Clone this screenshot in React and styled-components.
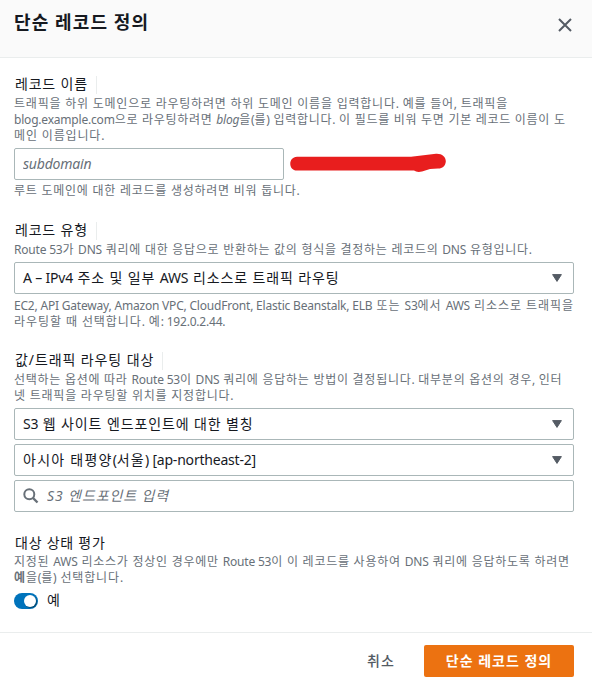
import React from 'react';
import styled, { createGlobalStyle } from 'styled-components';

const GlobalStyle = createGlobalStyle`
  * { box-sizing: border-box; }
  body { margin: 0; background: #fff; }
  button, input { font: inherit; }
`;

const Dialog = styled.div`
  display: flex;
  flex-direction: column;
  width: 592px;
  height: 688px;
  overflow: hidden;
  background: #fff;
  color: #16191f;
  font-family: "Noto Sans", "Noto Sans CJK KR", sans-serif;
  font-size: 14px;
`;

const Header = styled.header`
  display: flex;
  justify-content: space-between;
  align-items: flex-start;
  height: 58px;
  padding: 10px 20px 0 14px;
  background: #fafafa;
  border-bottom: 1px solid #eaeded;
`;

const Title = styled.h1`
  margin: 0;
  font-size: 18px;
  line-height: 24px;
  font-weight: 700;
  letter-spacing: 1.1px;
  white-space: nowrap;
`;

const CloseButton = styled.button`
  display: flex;
  margin: 8px 0 0;
  padding: 0;
  border: 0;
  background: none;
`;

const Body = styled.main`
  display: flex;
  flex-direction: column;
  padding: 17px 18px 0 14px;
  height: 575px;
  border-bottom: 1px solid #eaeded;
`;

const Field = styled.section`
  display: flex;
  flex-direction: column;
  margin-bottom: ${(p) => p.$after || 0}px;
`;

const Label = styled.div`
  display: flex;
  align-items: center;
  height: 20px;
  padding: 0 0 2px 1px;
  line-height: 18px;
  letter-spacing: ${(p) => p.$ls}px;
  white-space: nowrap;
`;

const LabelDivider = styled.span`
  width: 1px;
  height: 18px;
  margin: 2px 0 0 8px;
  background: #eaeded;
`;

const Hint = styled.div`
  margin: ${(p) => p.$m || '0'};
  color: #687078;
  font-size: 12px;
  line-height: 16px;
`;

const Line = styled.div`
  height: 16px;
  letter-spacing: ${(p) => p.$ls}px;
  white-space: nowrap;
`;

const Latin = styled.span`
  letter-spacing: -0.2px;
`;

const Controls = styled.div`
  display: flex;
  flex-direction: column;
  gap: 4px;
`;

const InputRow = styled.div`
  display: flex;
  align-items: center;
  gap: 5px;
`;

const Box = styled.div`
  display: flex;
  align-items: center;
  width: ${(p) => p.$width || '100%'};
  height: 32px;
  padding: 0 11px 0 8px;
  border: 1px solid #aab7b8;
  border-radius: 2px;
  background: #fff;
`;

const Value = styled.span`
  flex: 1;
  line-height: 20px;
  letter-spacing: ${(p) => p.$ls}px;
  white-space: nowrap;
`;

const Input = styled.input`
  flex: 1;
  min-width: 0;
  padding: 0;
  border: 0;
  outline: 0;
  background: none;
  line-height: 20px;
  &::placeholder {
    color: #687078;
    opacity: 1;
    font-style: italic;
    letter-spacing: ${(p) => p.$ls}px;
  }
`;

const SearchSvg = styled.svg`
  flex: none;
  margin-right: 8px;
`;

const ToggleRow = styled.label`
  display: flex;
  align-items: center;
  height: 16px;
  margin-top: 7px;
  gap: 9px;
`;

const ToggleText = styled.span`
  line-height: 18px;
  padding-bottom: 2px;
`;

const Switch = styled.span`
  display: flex;
  justify-content: flex-end;
  align-items: center;
  width: 24px;
  height: 16px;
  padding: 2px;
  border-radius: 8px;
  background: #0073bb;
`;

const Knob = styled.span`
  width: 12px;
  height: 12px;
  border-radius: 50%;
  background: #fff;
  box-shadow: 1px 1px 1px rgba(0, 28, 36, 0.5);
`;

const Footer = styled.footer`
  display: flex;
  justify-content: flex-end;
  align-items: flex-start;
  padding: 12px 18px 0 0;
`;

const Button = styled.button`
  height: 32px;
  width: ${(p) => p.$width}px;
  padding: 0;
  border: 0;
  border-radius: 2px;
  background: ${(p) => (p.$primary ? '#ec7211' : 'transparent')};
  color: ${(p) => (p.$primary ? '#fff' : '#545b64')};
  font-weight: ${(p) => (p.$primary ? 700 : 500)};
  line-height: 20px;
  letter-spacing: 1px;
`;

/* Latin runs are set tighter than the Hangul around them. */
function Mixed({ children }) {
  return children
    .split(/([!-~–]+(?: [!-~–]+)*)/)
    .map((run, i) => (i % 2 ? <Latin key={i}>{run}</Latin> : run));
}

function Caret() {
  return (
    <svg width="10" height="8" viewBox="0 0 10 8">
      <path d="M.6 .6h8.8L5 7.4z" fill="#545b64" stroke="#545b64" strokeLinejoin="round" />
    </svg>
  );
}

function Select({ ls, children }) {
  return (
    <Box>
      <Value $ls={ls}><Mixed>{children}</Mixed></Value>
      <Caret />
    </Box>
  );
}

export default function App() {
  return (
    <>
      <GlobalStyle />
      <Dialog>
        <Header>
          <Title>단순 레코드 정의</Title>
          <CloseButton aria-label="닫기">
            <svg width="14" height="14" viewBox="0 0 14 14" fill="none" stroke="#545b64" strokeWidth="2">
              <path d="M1 1l12 12M13 1L1 13" />
            </svg>
          </CloseButton>
        </Header>
        <Body>
          <Field $after={22}>
            <Label $ls={0.8}>레코드 이름<LabelDivider /></Label>
            <Hint $m="1px 0 4px">
              <Line $ls={0.775}><Mixed>트래픽을 하위 도메인으로 라우팅하려면 하위 도메인 이름을 입력합니다. 예를 들어, 트래픽을</Mixed></Line>
              <Line $ls={0.71}>
                <Mixed>blog.example.com으로 라우팅하려면 </Mixed>
                <i><Mixed>blog</Mixed></i>
                <Mixed>을(를) 입력합니다. 이 필드를 비워 두면 기본 레코드 이름이 도</Mixed>
              </Line>
              <Line $ls={0.85}><Mixed>메인 이름입니다.</Mixed></Line>
            </Hint>
            <InputRow>
              <Box $width="270px"><Input placeholder="subdomain" $ls={-0.2} /></Box>
              <svg width="158" height="22" viewBox="289 153 158 22">
                <path d="M297 156.7H411L436 153.8C442 153.4 446 157 445.8 161.5C445.5 166 442 168.8 438 168.6L430 169L422 171.5C418 172.6 416 171.6 414 170.6H297C288 170.4 288 157 297 156.7Z" fill="#e81e1e" />
              </svg>
            </InputRow>
            <Hint $m="3px 0 0">
              <Line $ls={0.75}><Mixed>루트 도메인에 대한 레코드를 생성하려면 비워 둡니다.</Mixed></Line>
            </Hint>
          </Field>

          <Field $after={21}>
            <Label $ls={0.8}>레코드 유형<LabelDivider /></Label>
            <Hint $m="1px 0 4px">
              <Line $ls={0.72}><Mixed>Route 53가 DNS 쿼리에 대한 응답으로 반환하는 값의 형식을 결정하는 레코드의 DNS 유형입니다.</Mixed></Line>
            </Hint>
            <Select ls={0.88}>A – IPv4 주소 및 일부 AWS 리소스로 트래픽 라우팅</Select>
            <Hint $m="4px 0 0">
              <Line $ls={0.95}><Mixed>EC2, API Gateway, Amazon VPC, CloudFront, Elastic Beanstalk, ELB 또는 S3에서 AWS 리소스로 트래픽을</Mixed></Line>
              <Line $ls={0.92}><Mixed>라우팅할 때 선택합니다. 예: 192.0.2.44.</Mixed></Line>
            </Hint>
          </Field>

          <Field $after={22}>
            <Label $ls={0.9}>값/트래픽 라우팅 대상<LabelDivider /></Label>
            <Hint $m="1px 0 4px">
              <Line $ls={0.73}><Mixed>선택하는 옵션에 따라 Route 53이 DNS 쿼리에 응답하는 방법이 결정됩니다. 대부분의 옵션의 경우, 인터</Mixed></Line>
              <Line $ls={0.77}><Mixed>넷 트래픽을 라우팅할 위치를 지정합니다.</Mixed></Line>
            </Hint>
            <Controls>
              <Select ls={0.88}>S3 웹 사이트 엔드포인트에 대한 별칭</Select>
              <Select ls={1.25}>아시아 태평양(서울) [ap-northeast-2]</Select>
              <Box>
                <SearchSvg width="16" height="16" viewBox="0 0 16 16" fill="none" stroke="#687078" strokeWidth="2">
                  <circle cx="6.3" cy="6.3" r="5" />
                  <path d="M10 10l4.5 4.5" strokeWidth="2.4" />
                </SearchSvg>
                <Input placeholder="S3 엔드포인트 입력" $ls={0.9} />
              </Box>
            </Controls>
          </Field>

          <Field>
            <Label $ls={0.75}>대상 상태 평가</Label>
            <Hint>
              <Line $ls={0.75}><Mixed>지정된 AWS 리소스가 정상인 경우에만 Route 53이 이 레코드를 사용하여 DNS 쿼리에 응답하도록 하려면</Mixed></Line>
              <Line $ls={0.85}><b>예</b><Mixed>을(를) 선택합니다.</Mixed></Line>
            </Hint>
            <ToggleRow>
              <Switch><Knob /></Switch>
              <ToggleText>예</ToggleText>
            </ToggleRow>
          </Field>
        </Body>
        <Footer>
          <Button $width={86}>취소</Button>
          <Button $primary $width={150}>단순 레코드 정의</Button>
        </Footer>
      </Dialog>
    </>
  );
}
